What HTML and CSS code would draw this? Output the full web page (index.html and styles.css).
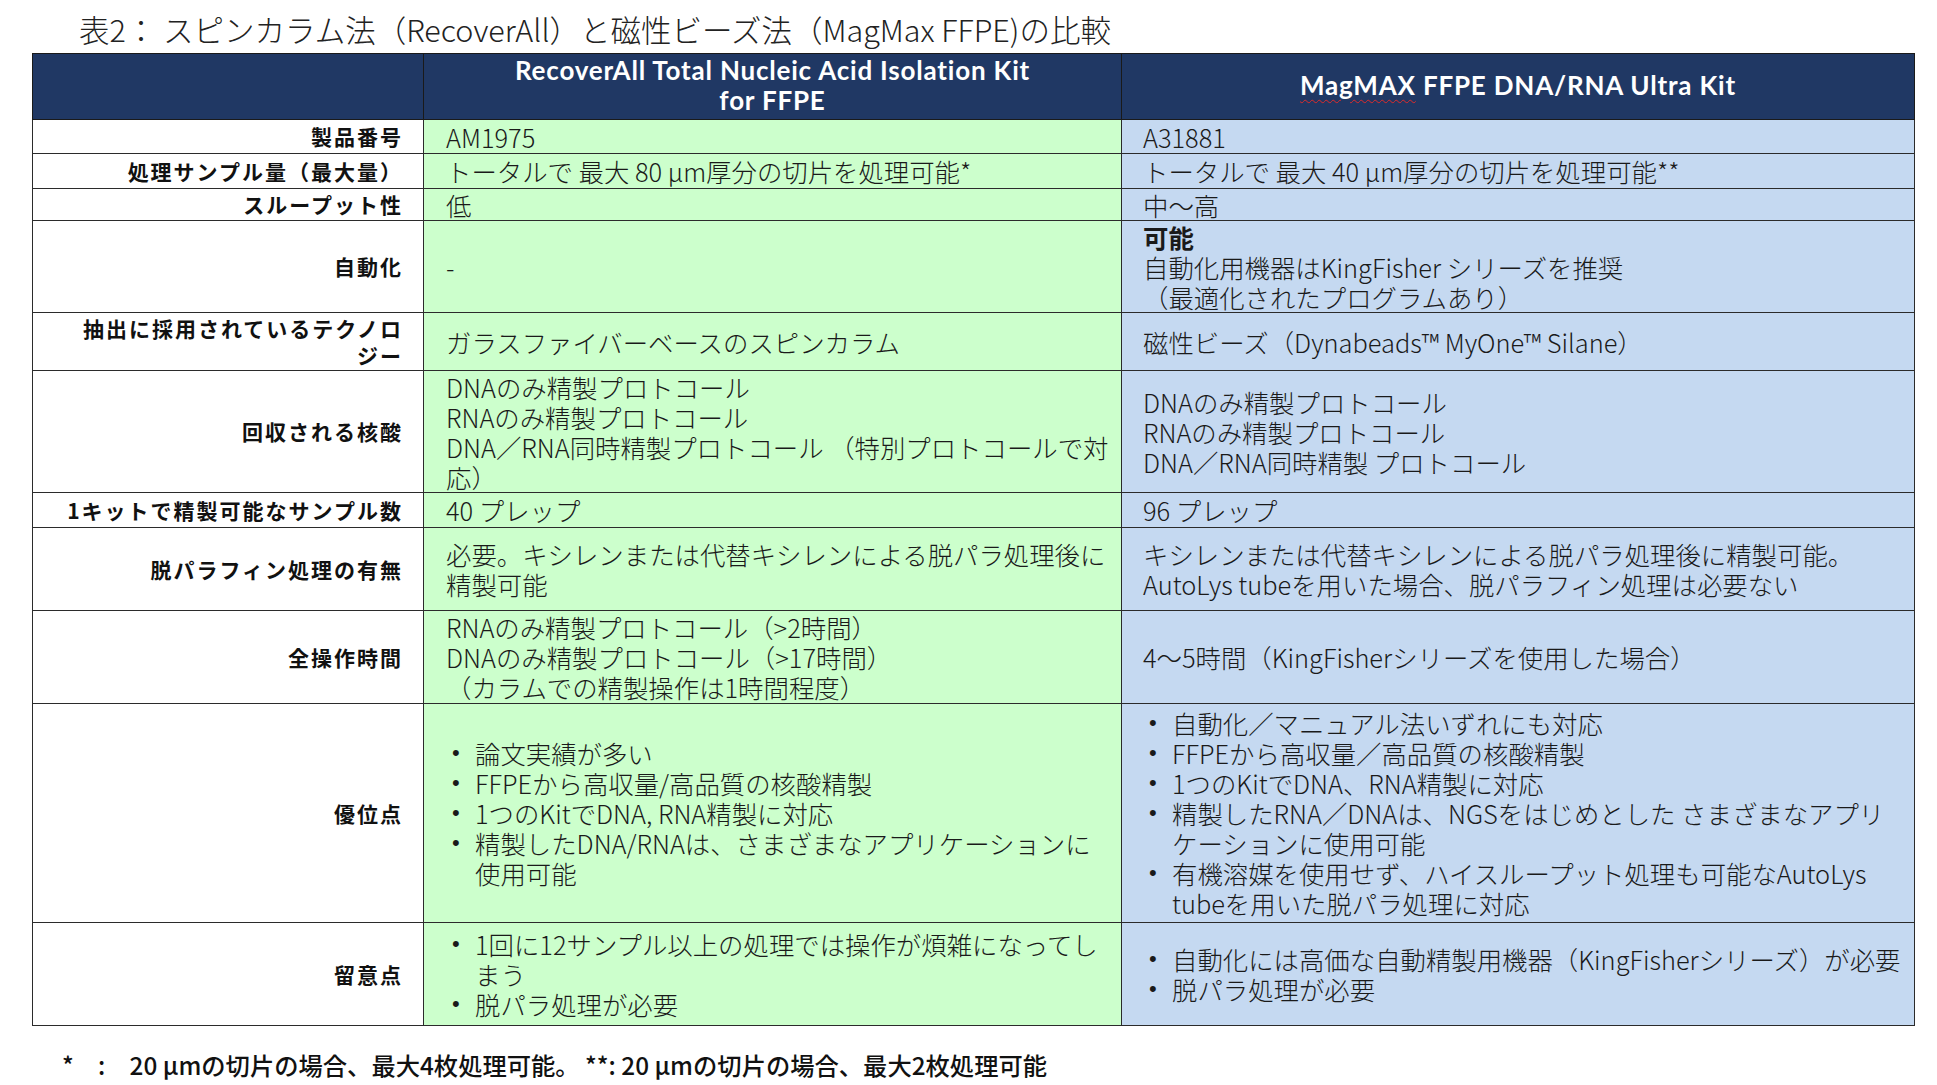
FILE: index.html
```html
<!DOCTYPE html>
<html lang="ja">
<head>
<meta charset="utf-8">
<title>表2</title>
<link rel="stylesheet" href="styles.css">
</head>
<body>
<div class="page">
  <h1 class="title">表2： スピンカラム法（RecoverAll）と磁性ビーズ法（MagMax FFPE)の比較</h1>
  <table class="cmp">
    <colgroup>
      <col class="c-label">
      <col class="c-ra">
      <col class="c-mm">
    </colgroup>
    <thead>
      <tr class="h-head">
        <th></th>
        <th>RecoverAll Total Nucleic Acid Isolation Kit<br>for FFPE</th>
        <th><span class="spell">MagMAX</span> FFPE DNA/RNA Ultra Kit</th>
      </tr>
    </thead>
    <tbody>
      <tr class="h34">
        <th class="lbl">製品番号</th>
        <td class="ra">AM1975</td>
        <td class="mm">A31881</td>
      </tr>
      <tr class="h35">
        <th class="lbl">処理サンプル量（最大量）</th>
        <td class="ra">トータルで 最大 80 µm厚分の切片を処理可能*</td>
        <td class="mm">トータルで 最大 40 µm厚分の切片を処理可能**</td>
      </tr>
      <tr class="h32">
        <th class="lbl">スループット性</th>
        <td class="ra">低</td>
        <td class="mm">中～高</td>
      </tr>
      <tr class="h92">
        <th class="lbl">自動化</th>
        <td class="ra">-</td>
        <td class="mm"><b class="strong">可能</b><br>自動化用機器はKingFisher シリーズを推奨<br>（最適化されたプログラムあり）</td>
      </tr>
      <tr class="h58">
        <th class="lbl">抽出に採用されているテクノロジー</th>
        <td class="ra">ガラスファイバーベースのスピンカラム</td>
        <td class="mm">磁性ビーズ（Dynabeads™ MyOne™ Silane）</td>
      </tr>
      <tr class="h122">
        <th class="lbl">回収される核酸</th>
        <td class="ra">DNAのみ精製プロトコール<br>RNAのみ精製プロトコール<br>DNA／RNA同時精製プロトコール （特別プロトコールで対応）</td>
        <td class="mm">DNAのみ精製プロトコール<br>RNAのみ精製プロトコール<br>DNA／RNA同時精製 プロトコール</td>
      </tr>
      <tr class="h35">
        <th class="lbl">1キットで精製可能なサンプル数</th>
        <td class="ra">40 プレップ</td>
        <td class="mm">96 プレップ</td>
      </tr>
      <tr class="h83">
        <th class="lbl">脱パラフィン処理の有無</th>
        <td class="ra">必要。キシレンまたは代替キシレンによる脱パラ処理後に精製可能</td>
        <td class="mm">キシレンまたは代替キシレンによる脱パラ処理後に精製可能。<br>AutoLys tubeを用いた場合、脱パラフィン処理は必要ない</td>
      </tr>
      <tr class="h93">
        <th class="lbl">全操作時間</th>
        <td class="ra">RNAのみ精製プロトコール（&gt;2時間）<br>DNAのみ精製プロトコール（&gt;17時間）<br>（カラムでの精製操作は1時間程度）</td>
        <td class="mm">4～5時間（KingFisherシリーズを使用した場合）</td>
      </tr>
      <tr class="h219">
        <th class="lbl">優位点</th>
        <td class="ra">
          <ul class="bul bul-ra">
            <li>論文実績が多い</li>
            <li>FFPEから高収量/高品質の核酸精製</li>
            <li>1つのKitでDNA, RNA精製に対応</li>
            <li>精製したDNA/RNAは、さまざまなアプリケーションに使用可能</li>
          </ul>
        </td>
        <td class="mm">
          <ul class="bul">
            <li>自動化／マニュアル法いずれにも対応</li>
            <li>FFPEから高収量／高品質の核酸精製</li>
            <li>1つのKitでDNA、RNA精製に対応</li>
            <li>精製したRNA／DNAは、NGSをはじめとした さまざまなアプリケーションに使用可能</li>
            <li>有機溶媒を使用せず、ハイスループット処理も可能なAutoLys tubeを用いた脱パラ処理に対応</li>
          </ul>
        </td>
      </tr>
      <tr class="h103">
        <th class="lbl">留意点</th>
        <td class="ra">
          <ul class="bul bul-ra">
            <li>1回に12サンプル以上の処理では操作が煩雑になってしまう</li>
            <li>脱パラ処理が必要</li>
          </ul>
        </td>
        <td class="mm">
          <ul class="bul">
            <li>自動化には高価な自動精製用機器（KingFisherシリーズ）が必要</li>
            <li>脱パラ処理が必要</li>
          </ul>
        </td>
      </tr>
    </tbody>
  </table>
  <p class="note">*　:　20 µmの切片の場合、最大4枚処理可能。 **: 20 µmの切片の場合、最大2枚処理可能</p>
</div>
</body>
</html>
```
FILE: styles.css
```css
html, body {
  margin: 0;
  padding: 0;
  background: #ffffff;
}

body {
  font-family: "Noto Sans CJK JP", "Noto Sans", sans-serif;
  color: #1a1a1a;
}

.page {
  padding: 9px 0 0 0;
}

.title {
  margin: 0 0 4px 79px;
  font-size: 30.5px;
  line-height: 40px;
  font-weight: 300;
  color: #222;
  white-space: nowrap;
}

.cmp {
  margin-left: 32px;
  width: 1882px;
  table-layout: fixed;
  border-collapse: collapse;
  border: 1.5px solid #2b2b2b;
}

.c-label { width: 391px; }
.c-ra { width: 698px; }
.c-mm { width: 793px; }

.cmp th,
.cmp td {
  border: 1px solid #2b2b2b;
  padding: 0;
  vertical-align: middle;
}

.cmp .h-head { height: 66px; }
.cmp .h-head th {
  background: #203864;
  color: #ffffff;
  font-family: "Lato", "Noto Sans CJK JP", sans-serif;
  font-weight: 700;
  font-size: 26px;
  letter-spacing: 0.8px;
  line-height: 30px;
  text-align: center;
  border-color: #1a1a1a;
  padding-bottom: 4px;
}

.spell {
  text-decoration: underline wavy #e02a2a;
  text-decoration-thickness: 1px;
  text-underline-offset: 4px;
}

.cmp .lbl {
  background: #ffffff;
  text-align: right;
  font-weight: 700;
  font-size: 21px;
  line-height: 27px;
  letter-spacing: 2px;
  padding: 0 20px 0 30px;
  color: #111;
}

.cmp .ra,
.cmp .mm {
  font-size: 25.4px;
  line-height: 30px;
  font-weight: 300;
  text-align: left;
}

.cmp .ra {
  background: #ccffcc;
  padding: 0 4px 0 22px;
}

.cmp .mm {
  background: #c5d9f1;
  padding: 0 6px 0 21px;
}

.strong {
  font-weight: 700;
}

.h32 { height: 32px; }
.h34 { height: 34px; }
.h35 { height: 35px; }
.h58 { height: 58px; }
.h83 { height: 83px; }
.h92 { height: 92px; }
.h93 { height: 93px; }
.h103 { height: 103px; }
.h122 { height: 122px; }
.h219 { height: 219px; }

.bul {
  list-style: none;
  margin: 0;
  padding: 0;
}

.bul-ra {
  padding-right: 12px;
}

.bul li {
  display: grid;
  grid-template-columns: 29px 1fr;
}

.bul li::before {
  content: "•";
  font-family: "Liberation Sans", sans-serif;
  font-size: 22px;
  padding-left: 6px;
}

.note {
  margin: 24px 0 0 62px;
  font-size: 24.3px;
  line-height: 30px;
  font-weight: 500;
  color: #111;
  white-space: nowrap;
}
```
